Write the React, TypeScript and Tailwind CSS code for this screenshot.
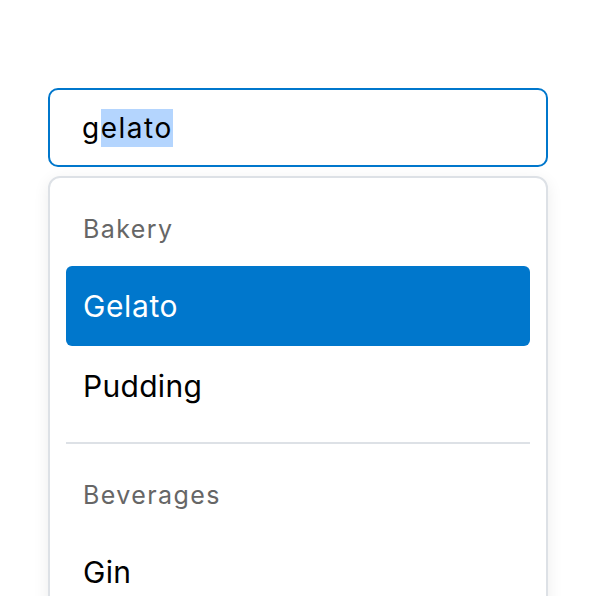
import React from "react";

export default function App() {
  return (
    <div className="w-[596px] h-[596px] overflow-hidden bg-white" style={{ fontFamily: "Inter, 'Noto Sans', sans-serif" }}>
      <div className="pt-[88px] px-[48px]">
        <div className="h-[79px] w-[500px] rounded-[10px] border-2 border-[#0077cc] flex items-center pl-[32px] text-[28px] tracking-[1.5px] text-black">
          <span>g</span>
          <span className="bg-[#b4d5fe] leading-[38px]">elato</span>
        </div>
        <div className="mt-[9px] w-[500px] rounded-[12px] border-2 border-[#dde1e6] p-[16px] shadow-[0_4px_16px_rgba(0,0,0,0.08)]">
          <div className="h-[72px] flex items-center px-[17px] text-[25px] tracking-[1.4px] text-[#666666]">Bakery</div>
          <div className="h-[80px] flex items-center px-[17px] rounded-[6px] bg-[#0077cc] text-white text-[30px] tracking-[0.6px]">Gelato</div>
          <div className="h-[80px] flex items-center px-[17px] text-black text-[30px] tracking-[0.3px]">Pudding</div>
          <div className="my-[16px] h-[2px] bg-[#dde1e6]" />
          <div className="h-[72px] flex items-center px-[17px] text-[25px] tracking-[1.4px] text-[#666666]">Beverages</div>
          <div className="h-[80px] flex items-center px-[17px] text-black text-[30px] tracking-[0.3px]">Gin</div>
          <div className="h-[80px] flex items-center px-[17px] text-black text-[30px] tracking-[0.3px]">Rum</div>
        </div>
      </div>
    </div>
  );
}
